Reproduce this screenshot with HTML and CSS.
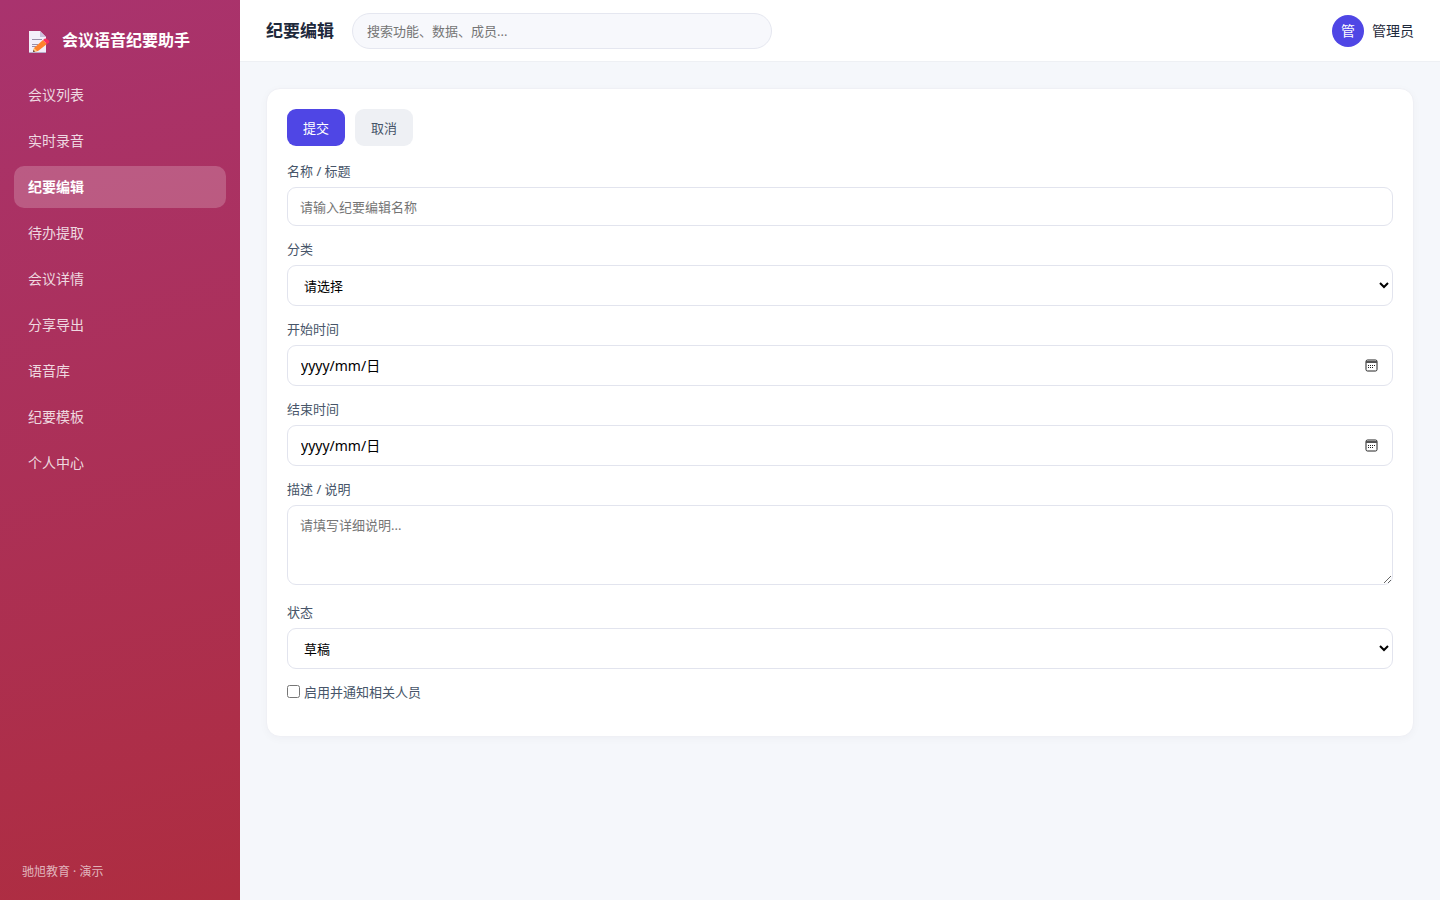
FILE: index.html
```html
<!DOCTYPE html>
<html lang="zh-CN">
<head>
  <meta charset="UTF-8">
  <meta name="viewport" content="width=device-width, initial-scale=1.0">
  <title>纪要编辑 - 会议语音纪要助手</title>
  <link rel="stylesheet" href="styles.css">
</head>

<body>

<div class="layout">
  <aside class="sidebar">
    <div class="brand">
      <svg class="brand-icon" viewBox="0 0 22 24" aria-hidden="true">
        <path d="M1 1h11l6 6v16H1z" fill="#f3eefa"/>
        <path d="M12 1l6 6h-6z" fill="#cbbfdc"/>
        <path d="M1 22h17v1H1z" fill="#b8adc9"/>
        <path d="M4 9.500h10M4 14.500h6M4 16.500h4" stroke="#998da9" stroke-width="1"/>
        <path d="M5 22l1-4 9-8 4 4-9 7z" fill="#ff822d"/>
        <path d="M5 22l1-4 3 3z" fill="#ffce7c"/>
        <path d="M5 22l.5-2 1.500 1.500z" fill="#402a32"/>
        <path d="M15 10l1.500-1.200q1-.8 2 0l2.500 2q.8 1-.1 1.900L19 14z" fill="#f92f60"/>
      </svg>
      <span>会议语音纪要助手</span>
    </div>
    <nav class="nav">
      <a href="#">会议列表</a>
      <a href="#">实时录音</a>
      <a href="#" class="active">纪要编辑</a>
      <a href="#">待办提取</a>
      <a href="#">会议详情</a>
      <a href="#">分享导出</a>
      <a href="#">语音库</a>
      <a href="#">纪要模板</a>
      <a href="#">个人中心</a>
    </nav>
    <div class="sidebar-foot">驰旭教育 · 演示</div>
  </aside>

  <div class="main">
    <header class="topbar">
      <h1>纪要编辑</h1>
      <input type="search" class="search" placeholder="搜索功能、数据、成员..." aria-label="搜索">
      <div class="user">
        <span class="avatar">管</span>
        <span>管理员</span>
      </div>
    </header>

    <main class="content">
      <form class="card" action="javascript:void(0);">
        <div class="toolbar">
          <button type="submit" class="btn primary">提交</button>
          <button type="button" class="btn">取消</button>
        </div>

        <div class="field">
          <label for="name">名称 / 标题</label>
          <input type="text" id="name" class="control" placeholder="请输入纪要编辑名称">
        </div>

        <div class="field">
          <label for="category">分类</label>
          <select id="category" class="control tall">
            <option>请选择</option>
          </select>
        </div>

        <div class="field">
          <label for="start">开始时间</label>
          <div class="control tall date">
            <input type="text" id="start" placeholder="yyyy/mm/日">
            <button type="button" aria-label="选择开始时间">
              <svg viewBox="0 0 13 13" aria-hidden="true">
                <rect x="1" y="1" width="11" height="11" rx="1.500"/>
                <path d="M1 2.500h11M1 3.500h11" class="head"/>
                <path d="M5 6.500h1M7 6.500h1M9 6.500h1M3 6.500h1M3 8.500h1M5 8.500h1M7 8.500h1"/>
              </svg>
            </button>
          </div>
        </div>

        <div class="field">
          <label for="end">结束时间</label>
          <div class="control tall date">
            <input type="text" id="end" placeholder="yyyy/mm/日">
            <button type="button" aria-label="选择结束时间">
              <svg viewBox="0 0 13 13" aria-hidden="true">
                <rect x="1" y="1" width="11" height="11" rx="1.500"/>
                <path d="M1 2.500h11M1 3.500h11" class="head"/>
                <path d="M5 6.500h1M7 6.500h1M9 6.500h1M3 6.500h1M3 8.500h1M5 8.500h1M7 8.500h1"/>
              </svg>
            </button>
          </div>
        </div>

        <div class="field field-text">
          <label for="desc">描述 / 说明</label>
          <textarea id="desc" class="control" placeholder="请填写详细说明..."></textarea>
        </div>

        <div class="field">
          <label for="status">状态</label>
          <select id="status" class="control tall">
            <option>草稿</option>
          </select>
        </div>

        <div class="check">
          <input type="checkbox" id="notify">
          <label for="notify">启用并通知相关人员</label>
        </div>
      </form>
    </main>
  </div>
</div>

</body>
</html>
```
FILE: styles.css
```css
* {
  box-sizing: border-box;
}

body {
  margin: 0;
  font-family: "Noto Sans", "Noto Sans CJK SC", sans-serif;
  font-size: 14px;
  line-height: 20px;
  color: #1e293b;
  background: #f5f7fb;
}

input, select, textarea, button {
  font-family: inherit;
  font-size: 13px;
}

.layout {
  display: flex;
  min-height: 100vh;
}

/* Sidebar */
.sidebar {
  display: flex;
  flex-direction: column;
  flex: 0 0 240px;
  padding: 22px 14px 18px;
  color: #fff;
  background: linear-gradient(165deg, #a9336e, #ae2d40);
}

.brand {
  display: flex;
  align-items: center;
  gap: 12px;
  height: 36px;
  padding: 0 14px;
  margin-bottom: 16px;
  font-size: 16px;
  font-weight: 700;
}

.brand-icon {
  width: 22px;
  height: 24px;
  margin-top: 4px;
}

.nav {
  display: flex;
  flex-direction: column;
  gap: 4px;
}

.nav a {
  padding: 11px 14px;
  border-radius: 10px;
  color: rgba(255, 255, 255, 0.82);
  text-decoration: none;
}

.nav a.active {
  color: #fff;
  font-weight: 700;
  background: rgba(255, 255, 255, 0.2);
}

.sidebar-foot {
  margin-top: auto;
  padding: 0 8px;
  font-size: 12px;
  color: rgba(255, 255, 255, 0.65);
}

/* Top bar */
.main {
  flex: 1;
  min-width: 0;
}

.topbar {
  display: flex;
  align-items: center;
  gap: 18px;
  height: 62px;
  padding: 0 26px;
  background: #fff;
  border-bottom: 1px solid #eef0f4;
}

.topbar h1 {
  margin: 0;
  font-size: 17px;
  font-weight: 700;
}

.search {
  flex: 0 1 420px;
  min-width: 0;
  height: 36px;
  padding: 0 14px;
  border: 1px solid #e5e7f0;
  border-radius: 18px;
  background: #f7f8fc;
  appearance: none;
}

.user {
  display: flex;
  align-items: center;
  gap: 8px;
  margin-left: auto;
}

.avatar {
  display: flex;
  align-items: center;
  justify-content: center;
  width: 32px;
  height: 32px;
  border-radius: 50%;
  color: #fff;
  background: #4f46e5;
}

/* Form */
.content {
  padding: 26px;
}

.card {
  padding: 20px 20px 35px;
  border: 1px solid #eff0f5;
  border-radius: 14px;
  background: #fff;
  box-shadow: 0 2px 8px rgba(30, 41, 59, 0.03);
}

.toolbar {
  display: flex;
  gap: 10px;
  margin-bottom: 16px;
}

.btn {
  height: 37px;
  padding: 0 16px;
  border: none;
  border-radius: 9px;
  color: #475569;
  background: #eef0f4;
  cursor: pointer;
}

.btn.primary {
  color: #fff;
  background: #4f46e5;
}

.field {
  display: flex;
  flex-direction: column;
  gap: 7px;
  margin-bottom: 14px;
}

.field-text {
  margin-bottom: 18px;
}

.field label,
.check label {
  font-size: 13px;
  line-height: 18px;
  color: #475569;
}

.control {
  width: 100%;
  height: 39px;
  padding: 0 12px;
  border: 1px solid #e2e4ee;
  border-radius: 9px;
  color: #000;
  background: #fff;
}

.control.tall {
  height: 41px;
}

textarea.control {
  height: 80px;
  padding: 9px 12px;
  resize: vertical;
}

.date {
  display: flex;
  align-items: center;
}

.date input {
  flex: 1;
  min-width: 0;
  padding: 0 1px;
  border: none;
  font-size: 14px;
  background: none;
}

.date input::placeholder {
  color: #000;
}

.date button {
  display: flex;
  padding: 2px;
  border: none;
  background: none;
}

.date svg {
  width: 13px;
  height: 13px;
  fill: none;
  stroke: #222;
}

.date .head {
  stroke: #555;
}

.check {
  display: flex;
  align-items: flex-start;
  gap: 4px;
}

.check input {
  width: 13px;
  height: 13px;
  margin: 2px 0 0;
}
```
